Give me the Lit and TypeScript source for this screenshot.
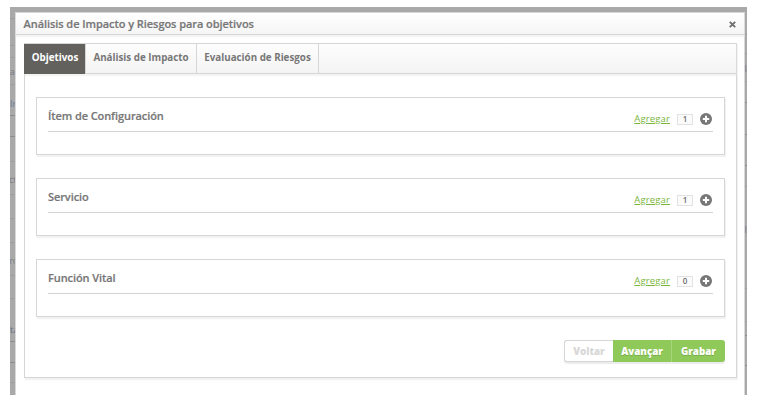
import { LitElement, html, css, svg } from "lit";
import { customElement, property } from "lit/decorators.js";

@customElement("objective-card")
class ObjectiveCard extends LitElement {
  @property() heading = "";
  @property({ type: Number }) count = 0;
  static styles = css`
    :host { display: block; box-sizing: border-box; height: 58px; border: 1px solid #d6d6d6; background: #fff; box-shadow: 1px 2px 1px #f2f2f2; padding: 0 11px; }
    .head { display: flex; align-items: flex-start; height: 33px; border-bottom: 1px solid #d3d3d3; }
    .title { flex: 1; font-size: 11px; font-weight: 600; line-height: 16px; padding-top: 10px; letter-spacing: -0.09px; color: #777; white-space: nowrap; -webkit-text-stroke: 0.2px #777; }
    .add { font-size: 9.5px; line-height: 14px; margin-top: 14px; letter-spacing: 0.14px; color: #7ab63c; text-decoration: underline; text-underline-offset: 1px; }
    .count { box-sizing: border-box; width: 16px; height: 11px; margin: 16px 7px 0 7px; border: 1px solid #e2e2e2; background: #fbfbfb; font-size: 8px; font-weight: 600; line-height: 8px; text-align: center; color: #6c6c6c; }
    .plus { width: 12px; height: 12px; margin: 15px 1px 0 0; }
  `;
  render() {
    return html`<div class="head">
      <span class="title">${this.heading}</span>
      <a class="add">Agregar</a>
      <span class="count">${this.count}</span>
      <svg class="plus" viewBox="0 0 12 12"><circle cx="6" cy="6" r="6" fill="#777"/><path d="M6 2.8v6.4M2.8 6h6.4" stroke="#fff" stroke-width="2"/></svg>
    </div>`;
  }
}

const leftRows = [
  [18, 0], [45, 0], [57, 0], [84, 0], [115, 1], [136, 1], [161, 0], [194, 0], [218, 0], [242, 0], [275, 0], [298, 0], [341, 1], [362, 1], [382, 0],
];
const rightRows = [
  [34, 0], [53, 0], [81, 0], [102, 1], [134, 1], [165, 1], [186, 0], [288, 0], [321, 0], [335, 1], [365, 1],
];

@customElement("app-root")
class AppRoot extends LitElement {
  static styles = css`
    :host { display: block; width: 760px; height: 403px; background: #fff; overflow: hidden; font-family: "Open Sans", sans-serif; color: #777; }
    .backdrop { position: relative; box-sizing: border-box; margin-left: 10px; width: 737px; height: 395px; border-top: 7px solid #fff; background: #a9a9a9; padding: 5px 2px 0 5px; overflow: hidden; }
    .behind { position: absolute; left: 0; top: 0; width: 737px; height: 388px; font-size: 9px; }
    .dialog { position: relative; box-sizing: border-box; width: 730px; height: 383px; border: 1px solid #d8d8d8; border-bottom: 0; background: #fff; }
    .bar { box-sizing: border-box; height: 22px; display: flex; justify-content: space-between; padding: 0 8px 0 7.5px; border-bottom: 1px solid #d6d6d6; background: linear-gradient(#fff, #f5f5f5); box-shadow: 0 2px 1px #f4f4f4; font-size: 11px; font-weight: 600; line-height: 22px; letter-spacing: -0.06px; -webkit-text-stroke: 0.2px #777; }
    .close { width: 7px; height: 7px; margin: 8px 0 0; }
    .panel { box-sizing: border-box; width: 713px; height: 335px; margin: 8px 0 0 8px; border: 1px solid #d6d6d6; box-shadow: 1px 2px 1px #f2f2f2; }
    .tabs { display: flex; box-sizing: border-box; height: 30px; border-bottom: 1px solid #d6d6d6; background: linear-gradient(#fdfdfd, #f4f4f4); box-shadow: 0 2px 1px #f4f4f4; }
    .tab { box-sizing: border-box; flex: none; border-right: 1px solid #d6d6d6; font-size: 9.8px; font-weight: 700; line-height: 28px; text-align: center; white-space: nowrap; }
    .t0 { width: 62px; height: 30px; margin-left: -1px; padding-left: 1px; background: #62615d; color: #fff; }
    .t1 { width: 111px; }
    .t2 { width: 122px; }
    .body { display: flex; flex-direction: column; gap: 23px; padding: 23px 11px 0; }
    .actions { display: flex; align-self: flex-end; height: 22px; width: 161px; border-radius: 3px; box-shadow: 0 2px 1px #ececec; }
    .btn { box-sizing: border-box; text-align: center; font-size: 9.8px; line-height: 24px; font-weight: 800; background: #8fc959; color: #fff; }
    .voltar { width: 49px; border: 1px solid #d6d6d6; border-right: 0; border-radius: 3px 0 0 3px; background: #fff; color: #d8d8d8; line-height: 22px; }
    .avancar { width: 59px; border-right: 1px solid #a6d57a; }
    .avancar, .grabar { text-shadow: 0 1px 0 #7aad4b; }
    .grabar { width: 53px; border-radius: 0 3px 3px 0; }
  `;
  render() {
    return html`<div class="backdrop">
      <svg class="behind" viewBox="0 7 737 388">
        ${leftRows.map(([y, dark]) => svg`<path d="M0 ${y + 0.5}h6" stroke=${dark ? "#8d8d8d" : "#9d9d9d"}/>`)}
        ${rightRows.map(([y, dark]) => svg`<path d="M734 ${y + 0.5}h3" stroke=${dark ? "#8b8b90" : "#9d9d9d"}/>`)}
        <g fill="#777b80">
          <text x="-0.3" y="75">a</text><text x="0" y="107" fill="#647c92">Ir</text>
          <text x="-1" y="183">ct</text><text x="-1" y="264">ro</text><text x="0" y="333" fill="#646c84">ta</text>
          <text x="734.6" y="72">l</text><text x="734.6" y="233">l</text>
        </g>
      </svg>
      <section class="dialog">
        <header class="bar"><span>Análisis de Impacto y Riesgos para objetivos</span>
          <svg class="close" viewBox="0 0 7 7"><path d="M.8 .8l5.4 5.4M6.2 .8l-5.4 5.4" stroke="#707070" stroke-width="1.9"/></svg>
        </header>
        <div class="panel">
          <nav class="tabs">
            <div class="tab t0">Objetivos</div>
            <div class="tab t1">Análisis de Impacto</div>
            <div class="tab t2">Evaluación de Riesgos</div>
          </nav>
          <div class="body">
            <objective-card heading="Ítem de Configuración" .count=${1}></objective-card>
            <objective-card heading="Servicio" .count=${1}></objective-card>
            <objective-card heading="Función Vital" .count=${0}></objective-card>
            <div class="actions">
              <div class="btn voltar">Voltar</div><div class="btn avancar">Avançar</div><div class="btn grabar">Grabar</div>
            </div>
          </div>
        </div>
      </section>
    </div>`;
  }
}
